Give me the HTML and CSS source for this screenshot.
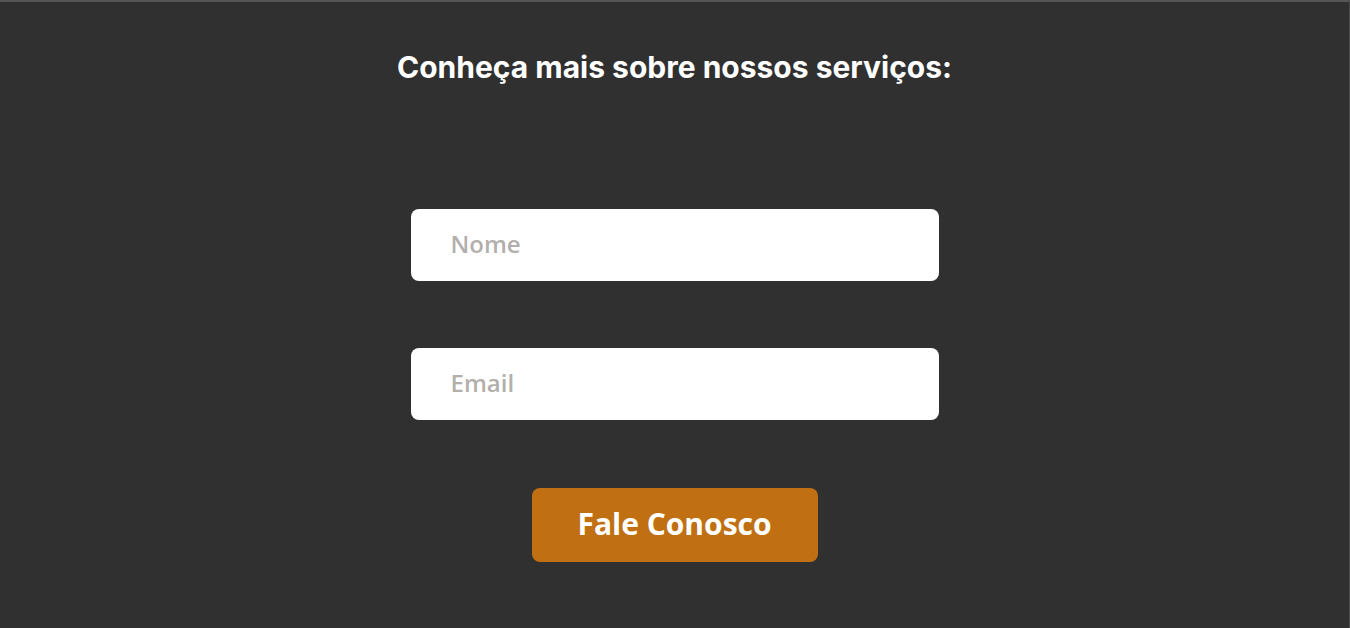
FILE: index.html
```html
<!DOCTYPE html>
<html lang="pt-BR">
<head>
<meta charset="utf-8">
<title>Contato</title>
<link rel="stylesheet" href="styles.css">
</head>
<body>
<main class="page">
  <h2 class="title">Conheça mais sobre nossos serviços:</h2>
  <form class="form">
    <input class="field" type="text" placeholder="Nome">
    <input class="field" type="email" placeholder="Email">
    <button class="btn" type="button">Fale Conosco</button>
  </form>
</main>
</body>
</html>
```
FILE: styles.css
```css
html, body {
  margin: 0;
  padding: 0;
  height: 100%;
  background: #303030;
}
.page {
  box-sizing: border-box;
  height: 628px;
  border-top: 2px solid #555555;
  border-right: 1px solid #4a4a4a;
  display: flex;
  flex-direction: column;
  align-items: center;
}
.title {
  margin: 46px 0 0;
  font-family: Inter, Roboto, "Liberation Sans", sans-serif;
  font-weight: 700;
  font-size: 30px;
  line-height: 38px;
  color: #ffffff;
  letter-spacing: 0;
}
.form {
  margin-top: 123px;
  display: flex;
  flex-direction: column;
  align-items: center;
}
.field {
  box-sizing: border-box;
  width: 528px;
  height: 72px;
  border: none;
  border-radius: 8px;
  background: #ffffff;
  padding: 0 40px 4px;
  font-family: "Open Sans", Lato, sans-serif;
  font-weight: 600;
  font-size: 24px;
  color: #333;
  outline: none;
  margin-bottom: 67px;
}
.field::placeholder {
  color: #b3afac;
}
.form .field + .field {
  margin-bottom: 68px;
}
.btn {
  width: 286px;
  height: 74px;
  border: none;
  border-radius: 8px;
  padding: 0 0 4px;
  background: #c07012;
  color: #ffffff;
  font-family: "Open Sans", Lato, sans-serif;
  font-weight: 700;
  font-size: 30px;
  cursor: pointer;
}
```
